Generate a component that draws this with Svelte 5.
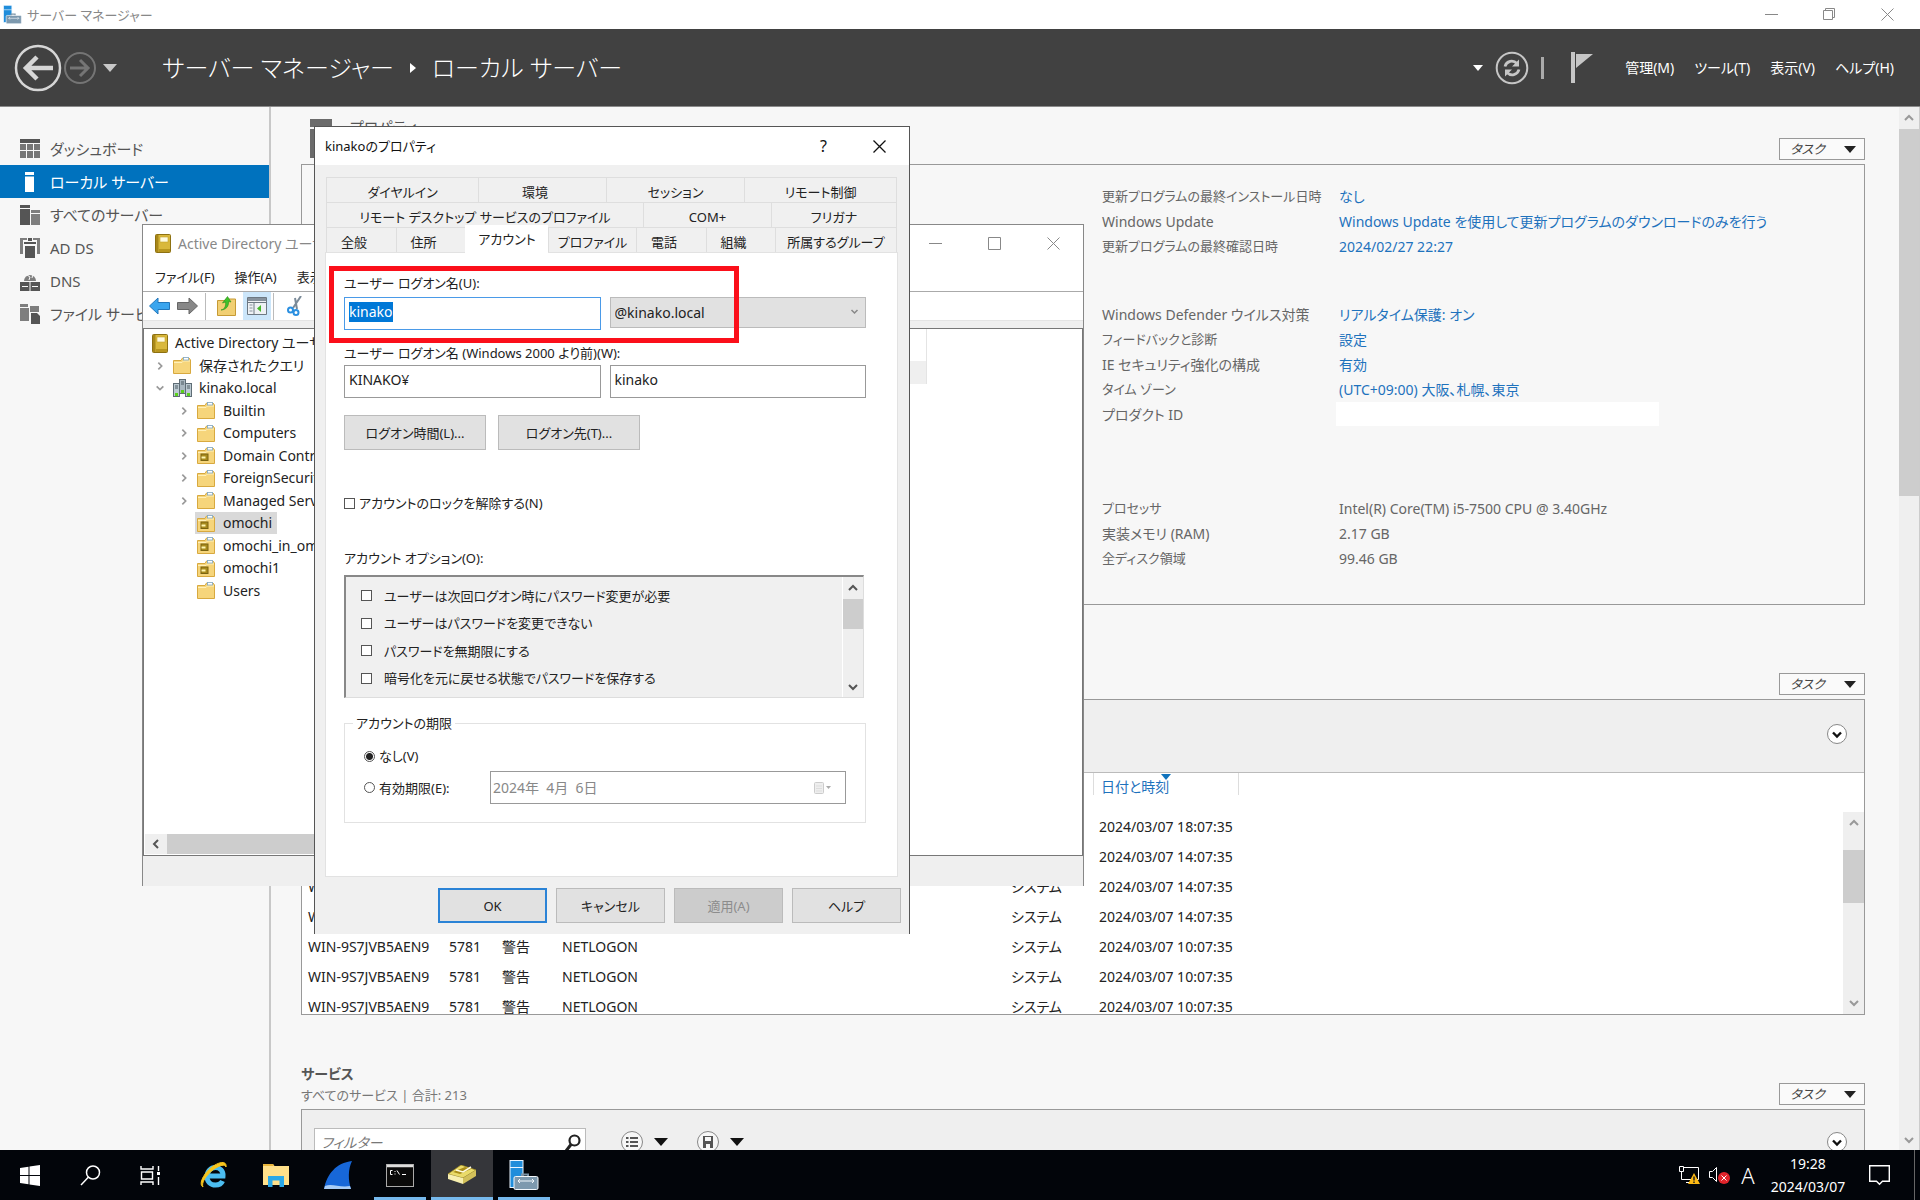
<script>
  import { onMount } from 'svelte';

  const nav = [
    { label: 'ダッシュボード', icon: 'dash' },
    { label: 'ローカル サーバー', icon: 'local', active: true },
    { label: 'すべてのサーバー', icon: 'all' },
    { label: 'AD DS', icon: 'adds' },
    { label: 'DNS', icon: 'dns' },
    { label: 'ファイル サービス', icon: 'file' }
  ];

  const facts = [
    [
      { k: '更新プログラムの最終インストール日時', v: 'なし', link: true },
      { k: 'Windows Update', v: 'Windows Update を使用して更新プログラムのダウンロードのみを行う', link: true },
      { k: '更新プログラムの最終確認日時', v: '2024/02/27 22:27', link: true }
    ],
    [
      { k: 'Windows Defender ウイルス対策', v: 'リアルタイム保護: オン', link: true },
      { k: 'フィードバックと診断', v: '設定', link: true },
      { k: 'IE セキュリティ強化の構成', v: '有効', link: true },
      { k: 'タイム ゾーン', v: '(UTC+09:00) 大阪、札幌、東京', link: true },
      { k: 'プロダクト ID', v: '', blank: true }
    ],
    [
      { k: 'プロセッサ', v: 'Intel(R) Core(TM) i5-7500 CPU @ 3.40GHz' },
      { k: '実装メモリ (RAM)', v: '2.17 GB' },
      { k: '全ディスク領域', v: '99.46 GB' }
    ]
  ];

  // Labels without Latin letters are set one size smaller so both scripts look even.
  const isKana = (s) => !/[A-Za-z]/.test(s);

  const events = ['18', '14', '14', '14', '10', '10', '10'].map((h) => `2024/03/07 ${h}:07:35`);

  const tree = [
    { t: 'Active Directory ユーザーとコンピューター', level: 0, icon: 'book' },
    { t: '保存されたクエリ', level: 1, icon: 'folder', arrow: 'r' },
    { t: 'kinako.local', level: 1, icon: 'domain', arrow: 'd' },
    { t: 'Builtin', level: 2, icon: 'folder', arrow: 'r' },
    { t: 'Computers', level: 2, icon: 'folder', arrow: 'r' },
    { t: 'Domain Controllers', level: 2, icon: 'ou', arrow: 'r' },
    { t: 'ForeignSecurityPrincipals', level: 2, icon: 'folder', arrow: 'r' },
    { t: 'Managed Service Accounts', level: 2, icon: 'folder', arrow: 'r' },
    { t: 'omochi', level: 2, icon: 'ou', selected: true },
    { t: 'omochi_in_omochi', level: 2, icon: 'ou' },
    { t: 'omochi1', level: 2, icon: 'ou' },
    { t: 'Users', level: 2, icon: 'folder' }
  ];

  const options = [
    'ユーザーは次回ログオン時にパスワード変更が必要',
    'ユーザーはパスワードを変更できない',
    'パスワードを無期限にする',
    '暗号化を元に戻せる状態でパスワードを保存する'
  ];

  let expiry = $state('never');
  let logon;
  onMount(() => {
    logon.focus();
    logon.select();
  });
</script>

{#snippet chev(dir)}
  <svg class="chev {dir}" viewBox="0 0 12 12" width="12" height="12"><path d="M2 8 L6 4 L10 8" fill="none" stroke="currentColor" stroke-width="2" /></svg>
{/snippet}

{#snippet tasks()}
  <button class="tasks">タスク<svg width="12" height="7" viewBox="0 0 12 7"><path d="M0 0H12L6 7Z" fill="#222" /></svg></button>
{/snippet}

{#snippet expander()}
  <button class="round" aria-label="展開">
    <svg width="22" height="22" viewBox="0 0 22 22"><circle cx="11" cy="11" r="9.5" fill="#fff" stroke="#888" /><path d="M7 9.5L11 13.5L15 9.5" fill="none" stroke="#111" stroke-width="2.4" /></svg>
  </button>
{/snippet}

{#snippet book()}
  <svg width="16" height="19" viewBox="0 0 16 19">
    <rect x="0.5" y="0.5" width="15" height="18" rx="1" fill="#d9b83c" stroke="#8d7112" />
    <rect x="1" y="1" width="2.5" height="17" fill="#a88719" />
    <rect x="5" y="3" width="8" height="5" fill="#fffbe0" stroke="#c2a02a" stroke-width="0.6" />
    <rect x="4" y="15" width="11" height="3" fill="#b8961f" />
  </svg>
{/snippet}

{#snippet treeIcon(kind)}
  {#if kind === 'book'}
    {@render book()}
  {:else if kind === 'domain'}
    <svg width="19" height="19" viewBox="0 0 19 19">
      <rect x="6.5" y="0.5" width="6" height="14" fill="#a9b7c0" stroke="#5f6d76" />
      <rect x="0.5" y="4.500" width="6" height="13" fill="#bccad2" stroke="#5f6d76" />
      <rect x="12.500" y="4.500" width="6" height="13" fill="#bccad2" stroke="#5f6d76" />
      <path d="M8 3h3M2 7h3M14 7h3M2 9h3M14 9h3M8 5h3" stroke="#4d5a63" />
      <path d="M2 14h3v3H2zM14 14h3v3h-3zM8 11h3v3H8z" fill="#5bd11b" />
    </svg>
  {:else}
    <svg width="18" height="17" viewBox="0 0 18 17">
      <path d="M0.5 3.500 H8 L9.500 1 H16 L17.500 3 V16.500 H0.500 Z" fill="#f6d57b" stroke="#d8a93f" />
      <path d="M1 5.500 H9 L10.500 4 H17" fill="none" stroke="#fff0b8" />
      <rect x="10.500" y="0.500" width="5" height="2.500" fill="#fff" stroke="#7da7c9" stroke-width="0.8" />
      {#if kind === 'ou'}
        <rect x="4" y="7" width="7" height="6.500" fill="#a88a1c" stroke="#7a6310" />
        <rect x="4.500" y="9.500" width="4" height="2" fill="#fff6b0" />
      {/if}
    </svg>
  {/if}
{/snippet}

{#snippet toolbox(w)}
  <svg width={w} height={w} viewBox="0 0 30 30">
    <rect x="1" y="0.500" width="13" height="27" fill="#1f8ddb" stroke="#e9f5ff" />
    <path d="M1 7.500H14" stroke="#e9f5ff" />
    <path d="M13 17v-2.500h6V17" fill="none" stroke="#7d95a8" stroke-width="2" />
    <rect x="5" y="16.500" width="24" height="13" rx="1.500" fill="#7d99ae" stroke="#f2f7fb" />
    <path d="M9 21h16M9 21l2-2M9 21l2 2M25 21l-2-2M25 21l-2 2" stroke="#f2f7fb" fill="none" />
  </svg>
{/snippet}

<div class="desktop">
  <header class="titlebar">
    {@render toolbox(19)}
    <h1>サーバー マネージャー</h1>
    <div class="winbtns">
      <button aria-label="最小化"><svg width="13" height="13"><path d="M0 6.500H13" stroke="#888" /></svg></button>
      <button aria-label="元に戻す"><svg width="13" height="13" fill="none" stroke="#888"><path d="M0.500 2.500h9v9h-9zM2.500 2.500v-2h9v9h-2" /></svg></button>
      <button aria-label="閉じる"><svg width="13" height="13" fill="none" stroke="#888"><path d="M0.500 0.500L12.500 12.500M12.500 0.500L0.500 12.500" /></svg></button>
    </div>
  </header>

  <div class="banner">
    <button class="plain" aria-label="戻る"><svg width="48" height="48" viewBox="0 0 48 48" fill="none" stroke="#d6d6d6"><circle cx="24" cy="24" r="22" stroke-width="2.500" /><path d="M39 24H12M23 13L12 24L23 35" stroke-width="4.500" /></svg></button>
    <button class="plain fwd" aria-label="進む"><svg width="34" height="34" viewBox="0 0 34 34" fill="none" stroke="#757575"><circle cx="17" cy="17" r="15" stroke-width="2" /><path d="M7 17H25M17 9L25 17L17 25" stroke-width="3" /></svg></button>
    <button class="plain drop" aria-label="履歴"><svg width="14" height="8"><path d="M0 0H14L7 8Z" fill="#c8c8c8" /></svg></button>
    <nav class="crumbs">
      <span>サーバー マネージャー</span>
      <svg width="6" height="10"><path d="M0 0L6 5L0 10Z" fill="#fff" /></svg>
      <span>ローカル サーバー</span>
    </nav>
    <div class="actions">
      <svg width="10" height="6"><path d="M0 0H10L5 6Z" fill="#fff" /></svg>
      <button class="plain" aria-label="更新"><svg width="34" height="34" viewBox="0 0 34 34" fill="none" stroke="#c6c6c6"><circle cx="17" cy="17" r="15.300" stroke-width="2" /><path d="M10 15.500C11.500 10 18 8.500 22 12.500M24 18.500C22.500 24 16 25.500 12 21.500" stroke-width="2.800" /><path d="M24 8.500V15.500H17ZM10 25.500V18.500H17Z" fill="#c6c6c6" stroke="none" /></svg></button>
      <i class="bar"></i>
      <button class="plain" aria-label="通知"><svg width="22" height="31"><path d="M0 0H4V31H0ZM5 2H22L5 16Z" fill="#c6c6c6" /></svg></button>
      <button class="plain menu">管理(M)</button>
      <button class="plain menu">ツール(T)</button>
      <button class="plain menu">表示(V)</button>
      <button class="plain menu">ヘルプ(H)</button>
    </div>
  </div>

  <div class="work">
    <aside>
      {#each nav as n}
        <a href="#{n.icon}" class="nav" class:active={n.active}>
          <svg width="20" height="20" viewBox="0 0 20 20" fill="currentColor">
            {#if n.icon === 'dash'}
              <path d="M0 0H20V4H0Z" />
              <path d="M0 5H6V11H0ZM7 5H13V11H7ZM14 5H20V11H14ZM0 12H6V19H0ZM7 12H13V19H7ZM14 12H20V19H14Z" opacity="0.8" />
            {:else if n.icon === 'local'}
              <path d="M5 0H14V3H5ZM5 4.500H14V20H5Z" />
            {:else if n.icon === 'all'}
              <path d="M0 0H10V3H0ZM0 4H10V20H0Z" />
              <path d="M11 5H20V8H11ZM11 9H20V20H11Z" opacity="0.75" />
            {:else if n.icon === 'adds'}
              <path d="M0 0H7V2H3V16H0ZM20 0H13V2H17V16H20Z" opacity="0.75" />
              <path d="M4 4H16V6H4ZM5 8H15V20H5ZM8 0H12V3H8Z" />
            {:else if n.icon === 'dns'}
              <path d="M4 10A6 6 0 1 1 16 10Z" opacity="0.75" />
              <path d="M0 11H9.500V20H0ZM10.500 11H20V20H10.500Z" />
              <path d="M2 15.500H8M12 15.500H18M7 4L10 6L9 9M13 3L12 7" stroke="#f7f7f7" fill="none" />
            {:else}
              <path d="M0 0H8V3H0ZM0 4H9V17H0ZM10 2H19V8H10Z" opacity="0.75" />
              <path d="M11 9H17L20 12V20H11Z" />
            {/if}
          </svg>
          {n.label}
        </a>
      {/each}
    </aside>

    <main>
      <section class="first">
        <div class="head">
          <svg class="prop" width="22" height="39"><path d="M0 0H22V8H0ZM0 10H22V39H0Z" fill="#6b6b6b" /></svg>
          <h2>プロパティ</h2>
          {@render tasks()}
        </div>
        <div class="panel facts">
          {#each facts as group}
            <dl>
              {#each group as f}
                <dt class:kana={isKana(f.k)}>{f.k}</dt>
                <dd>
                  {#if f.link}<a href="#setting">{f.v}</a>{:else if f.blank}<span class="blank"></span>{:else}{f.v}{/if}
                </dd>
              {/each}
            </dl>
          {/each}
        </div>
      </section>

      <section>
        <div class="head tall">{@render tasks()}</div>
        <div class="panel events">
          <div class="filterbar big">{@render expander()}</div>
          <div class="sheet">
            <table>
              <colgroup><col class="c1" /><col class="c2" /><col class="c3" /><col class="c4" /><col class="c5" /><col class="c6" /><col /></colgroup>
              <thead>
                <tr><th></th><th></th><th></th><th></th><th></th><th class="sorted"><span>日付と時刻</span><svg width="10" height="6"><path d="M0 0H10L5 6Z" fill="#1073bd" /></svg></th><th></th></tr>
              </thead>
              <tbody>
                {#each events as e}
                  <tr><td>WIN-9S7JVB5AEN9</td><td>5781</td><td>警告</td><td>NETLOGON</td><td>システム</td><td>{e}</td><td></td></tr>
                {/each}
              </tbody>
            </table>
            <div class="vbar inner">{@render chev('up')}<i></i>{@render chev('down')}</div>
          </div>
        </div>
      </section>

      <section class="rest">
        <div class="head tall">
          <div class="titles">
            <h2>サービス</h2>
            <p>すべてのサービス | 合計: 213</p>
          </div>
          {@render tasks()}
        </div>
        <div class="panel last">
          <div class="filterbar">
            <label class="search"><input placeholder="フィルター" aria-label="フィルター" />
              <svg width="16" height="19" viewBox="0 0 16 19" fill="none" stroke="#222" stroke-width="2.200"><circle cx="9.500" cy="6.500" r="5" /><path d="M6 10.500L1 17" stroke-width="3" /></svg></label>
            <button class="round combo" aria-label="クエリ"><svg width="24" height="24" viewBox="0 0 24 24"><circle cx="12" cy="12" r="10.500" fill="#f7f7f7" stroke="#888" /><path d="M6 8h2.500M6 12h2.500M6 16h2.500M10 8h8M10 12h8M10 16h8" stroke="#555" stroke-width="2" /></svg><svg width="14" height="8"><path d="M0 0H14L7 8Z" fill="#111" /></svg></button>
            <button class="round combo" aria-label="保存"><svg width="24" height="24" viewBox="0 0 24 24"><circle cx="12" cy="12" r="10.500" fill="#f7f7f7" stroke="#888" /><path d="M7 6H17V18H7Z" fill="#555" /><path d="M9 7h6v4H9zM10 14h4v4h-4z" fill="#f7f7f7" /></svg><svg width="14" height="8"><path d="M0 0H14L7 8Z" fill="#111" /></svg></button>
            <span class="grow"></span>
            {@render expander()}
          </div>
        </div>
      </section>
    </main>
    <div class="vbar outer">{@render chev('up')}<i></i>{@render chev('down')}</div>
  </div>

  <footer class="taskbar">
    <button aria-label="スタート"><svg width="20" height="21" viewBox="0 0 20 21" fill="#fff"><path d="M0 3L8.500 1.800V10H0ZM9.500 1.600L20 0V10H9.500ZM0 11H8.500V19.200L0 18ZM9.500 11H20V21L9.500 19.400Z" /></svg></button>
    <button aria-label="検索"><svg width="21" height="21" fill="none" stroke="#fff" stroke-width="1.500"><circle cx="13" cy="7.500" r="6.500" /><path d="M8.500 12L1 20" /></svg></button>
    <button aria-label="タスク ビュー"><svg width="21" height="21" fill="none" stroke="#fff" stroke-width="1.400"><path d="M1 1v3h12V1M1 20v-3h12v3M1.500 7h11v7h-11zM18.500 1v5M18.500 12v8" /><path d="M17 7h3v3h-3z" fill="#fff" stroke="none" /></svg></button>
    <button class="app ie" aria-label="Internet Explorer"><svg width="28" height="28" viewBox="0 0 28 28" fill="none"><path d="M7 15H23C23.500 9.500 19.500 6.500 15.500 6.500C10.500 6.500 7 10.500 7 15.500C7 20.500 10.500 24 15.500 24C19 24 21.500 22.500 22.500 20" stroke="#4cbdf0" stroke-width="5" /><path d="M3 26C-2 23 4 12 12 6C20 0 27 0 26 6C25 3 20 4 14 8C6 14 1 22 3 26Z" fill="#f8c51c" stroke="#f8c51c" /></svg></button>
    <button class="app" aria-label="エクスプローラー"><svg width="28" height="24" viewBox="0 0 28 24"><path d="M1 1H11L12.500 3H27V22H1Z" fill="#ffe08a" /><path d="M1 1H11L12 3H1Z" fill="#e9b53b" /><path d="M6 24V13H22V24H17.500V17.500H10.500V24Z" fill="#2aa8e8" /></svg></button>
    <button class="app" aria-label="Wireshark"><svg width="30" height="29" viewBox="0 0 30 29"><path d="M1 28C4 13 13 2 29 0C25 8 25 19 28 28Z" fill="#1767d8" /><path d="M2 25C9 22 17 27 27 25L28 28H1Z" fill="#a9cdf6" /></svg></button>
    <button class="app open" aria-label="コマンド プロンプト"><svg width="28" height="23" viewBox="0 0 28 23"><rect x="0.500" y="0.500" width="27" height="22" fill="#0a0a0a" stroke="#aaa" /><path d="M1 2H27" stroke="#ddd" stroke-width="2.500" /><path d="M6.500 6.500H4.500V10.500H6.500M9 7v1M9 9.500v1M11 6.500L13.500 10.500M16 10.500H20" stroke="#fff" fill="none" /></svg></button>
    <button class="app open current" aria-label="Active Directory"><svg width="30" height="20" viewBox="0 0 30 20"><path d="M1 9L14 0L29 5L16 13Z" fill="#eadb6a" stroke="#9b861f" stroke-width="0.700" /><path d="M1 9L16 13V19L1 14Z" fill="#f7efb0" /><path d="M16 13L29 5V11L16 19Z" fill="#d2c05a" /><path d="M6 7L18 2L24 4L13 9Z" fill="#a98c17" /><path d="M9 5L16 7L24 2" stroke="#fffbe0" stroke-width="1.500" fill="none" /></svg></button>
    <button class="app open" aria-label="サーバー マネージャー">{@render toolbox(30)}</button>
    <span class="grow"></span>
    <div class="tray">
      <svg width="21" height="20" viewBox="0 0 21 20" fill="none" stroke="#fff"><path d="M5 2.500H19.500V14.500H2.500V7M7 17.500H14M0.500 1.500H4.500V6.500H0.500Z" /><path d="M15 8L21 19H9Z" fill="#fdb913" stroke="none" /><path d="M15 11.500V15.500M15 16.500V18" stroke="#222" stroke-width="1.500" /></svg>
      <svg width="21" height="18" viewBox="0 0 21 18" fill="none" stroke="#fff"><path d="M0.500 5.500H3.500L7.500 1.500V15.500L3.500 11.500H0.500Z" /><circle cx="15" cy="12" r="6" fill="#e0242b" stroke="none" /><path d="M12.500 9.500L17.500 14.500M17.500 9.500L12.500 14.500" /></svg>
      <span class="ime">A</span>
      <time><span>19:28</span><span>2024/03/07</span></time>
      <svg width="21" height="21" fill="none" stroke="#fff" stroke-width="1.400"><path d="M0.700 0.700H20.300V16.300H13.500L10.500 19.300L7.500 16.300H0.700Z" /></svg>
      <i class="peek"></i>
    </div>
  </footer>

  <div class="aduc" role="group" aria-label="Active Directory ユーザーとコンピューター">
    <div class="bar1">
      {@render book()}
      <span class="cap">Active Directory ユーザーとコンピューター</span>
      <div class="ctl">
        <button class="plain" aria-label="最小化"><svg width="13" height="13"><path d="M0 6.500H13" stroke="#888" /></svg></button>
        <button class="plain" aria-label="最大化"><svg width="13" height="13"><path d="M0.500 0.500h12v12h-12z" fill="none" stroke="#888" /></svg></button>
        <button class="plain" aria-label="閉じる"><svg width="13" height="13"><path d="M0.500 0.500L12.500 12.500M12.500 0.500L0.500 12.500" stroke="#888" /></svg></button>
      </div>
    </div>
    <div class="menus"><button class="plain">ファイル(F)</button><button class="plain">操作(A)</button><button class="plain">表示(V)</button></div>
    <div class="tools">
      <svg width="21" height="20" viewBox="0 0 21 20"><path d="M0.500 10L9 2V6.500H20.500V13.500H9V18Z" fill="#3aa5ee" stroke="#2277bb" /></svg>
      <svg width="21" height="20" viewBox="0 0 21 20"><path d="M20.500 10L12 2V6.500H0.500V13.500H12V18Z" fill="#888" stroke="#666" /></svg>
      <i></i>
      <svg class="up" width="19" height="20" viewBox="0 0 19 20"><path d="M0.500 4.500H8L9 3H18.500V19.500H0.500Z" fill="#f1cf73" stroke="#c69a35" /><path d="M4 14C8 13 9 10 8.500 6L5.500 7L10.500 0.500L14 6L11.500 5.500C12 10 9 14 4 14Z" fill="#3fc22a" stroke="#2a8f1b" stroke-width="0.600" /></svg>
      <span class="on"><svg width="20" height="18" viewBox="0 0 20 18"><path d="M0.500 0.500H19.500V17.500H0.500Z" fill="#eef1f4" stroke="#6d7882" /><path d="M1 2.500H19" stroke="#87929d" stroke-width="3" /><path d="M7 5V17M1 5.500H19" stroke="#6d7882" /><path d="M2.500 8h3M2.500 11h3M2.500 14h3" stroke="#87929d" /><path d="M14 8V15L10 11.500Z" fill="#46b82a" /></svg></span>
      <i></i>
      <svg class="cut" width="16" height="20" viewBox="0 0 16 20" fill="none"><path d="M14 0L6 12M8 2L10 13" stroke="#7b8b99" stroke-width="2" /><circle cx="3.500" cy="14" r="2.500" stroke="#2a8fe0" stroke-width="2" /><circle cx="9" cy="16.500" r="2.500" stroke="#2a8fe0" stroke-width="2" /></svg>
    </div>
    <div class="panes">
      <div class="pane">
        <ul>
          {#each tree as n}
            <li class="lv{n.level}">
              <span class="tw">{#if n.arrow}{@render chev(n.arrow === 'r' ? 'right' : 'down')}{/if}</span>
              <span class="node" class:selected={n.selected}><span class="ico">{@render treeIcon(n.icon)}</span><span class="name">{n.t}</span></span>
            </li>
          {/each}
        </ul>
        <div class="hbar"><span>{@render chev('left')}</span><i></i></div>
      </div>
      <div class="list"><i></i></div>
    </div>
    <div class="status"></div>
  </div>

  <div class="dialog" role="dialog" aria-label="kinakoのプロパティ">
    <div class="dtitle">
      <span>kinakoのプロパティ</span>
      <button class="plain" aria-label="ヘルプ">?</button>
      <button class="plain" aria-label="閉じる"><svg width="13" height="13"><path d="M0.500 0.500L12.500 12.500M12.500 0.500L0.500 12.500" stroke="#111" stroke-width="1.300" /></svg></button>
    </div>
    <div class="dbody">
      <div class="tabs t1"><button>ダイヤルイン</button><button class="short">環境</button><button>セッション</button><button>リモート制御</button></div>
      <div class="tabs t2"><button>リモート デスクトップ サービスのプロファイル</button><button>COM+</button><button>フリガナ</button></div>
      <div class="tabs t3"><button class="short">全般</button><button class="short">住所</button><button class="cur">アカウント</button><button>プロファイル</button><button class="short">電話</button><button class="short">組織</button><button>所属するグループ</button></div>
      <div class="page">
        <label for="upn">ユーザー ログオン名(U):</label>
        <div class="pair p1">
          <input id="upn" class="focus" value="kinako" bind:this={logon} />
          <div class="domain"><select aria-label="ドメイン"><option>@kinako.local</option></select>{@render chev('down')}</div>
        </div>
        <label class="lab-sam" for="sam">ユーザー ログオン名 (Windows 2000 より前)(W):</label>
        <div class="pair p2">
          <input value="KINAKO¥" aria-label="NetBIOS ドメイン" readonly />
          <input id="sam" value="kinako" />
        </div>
        <div class="btns"><button class="btn">ログオン時間(L)...</button><button class="btn">ログオン先(T)...</button></div>
        <label class="check"><input type="checkbox" />アカウントのロックを解除する(N)</label>
        <div class="lab-opts" id="opts">アカウント オプション(O):</div>
        <div class="options" role="group" aria-labelledby="opts">
          <div class="rows">
            {#each options as o}
              <label><input type="checkbox" />{o}</label>
            {/each}
          </div>
          <div class="vbar list-bar">{@render chev('up')}<i></i>{@render chev('down')}</div>
        </div>
        <fieldset>
          <legend>アカウントの期限</legend>
          <label class="radio"><input type="radio" name="exp" value="never" bind:group={expiry} />なし(V)</label>
          <div class="date">
            <label class="radio"><input type="radio" name="exp" value="end" bind:group={expiry} />有効期限(E):</label>
            <div class="datebox"><input value="2024年  4月  6日" aria-label="有効期限の日付" disabled /><svg width="18" height="12" viewBox="0 0 18 12"><rect x="0.500" y="0.500" width="9" height="11" rx="1" fill="#eee" stroke="#ccc" /><path d="M2 4h6M2 6.500h6M2 9h6" stroke="#ddd" /><path d="M12 4H17L14.500 7Z" fill="#aaa" /></svg></div>
          </div>
        </fieldset>
      </div>
      <div class="dfoot"><button class="btn ok">OK</button><button class="btn">キャンセル</button><button class="btn" disabled>適用(A)</button><button class="btn">ヘルプ</button></div>
    </div>
    <div class="mark"></div>
  </div>
</div>

<style>
  :global(body) { margin: 0; overflow: hidden; }
  .desktop {
    position: relative; height: 100vh; display: flex; flex-direction: column; overflow: hidden;
    font: 14px/20px "Noto Sans", "Noto Sans CJK JP", sans-serif;
    font-feature-settings: "palt"; color: #222; background: #f7f7f7;
  }
  .desktop * { box-sizing: border-box; }
  button, input, select { font: inherit; font-feature-settings: inherit; color: inherit; margin: 0; border-radius: 0; }
  button { padding: 0; white-space: nowrap; }
  svg { display: block; flex: none; }
  .plain, .winbtns button, .taskbar button, .round { border: 0; background: none; }
  h1, h2, p, dl, dd, ul { margin: 0; padding: 0; font-weight: 400; }
  .grow { flex: 1; }
  .chev.down { transform: rotate(180deg); }
  .chev.right { transform: rotate(90deg); }
  .chev.left { transform: rotate(-90deg); }

  .titlebar { height: 29px; flex: none; display: flex; align-items: center; background: #fff; padding: 0 4px 0 3px; gap: 5px; }
  h1 { font-size: 13px; color: #888; flex: 1; }
  .winbtns { display: flex; }
  .winbtns button { width: 58px; height: 28px; display: grid; place-items: center; }

  .banner { height: 78px; flex: none; display: flex; align-items: center; background: #414141; color: #fff; padding: 0 26px 0 14px; border-bottom: 1px solid #8a8a8a; }
  .fwd { margin-left: 1px; }
  .drop { margin-left: 6px; padding: 4px 0; }
  .crumbs { display: flex; align-items: center; gap: 16px; margin-left: 45px; font-size: 24px; line-height: 40px; font-weight: 300; white-space: nowrap; flex: 1; }
  .actions { display: flex; align-items: center; }
  .actions .bar { width: 3px; height: 22px; background: #aaa; margin: 0 27px 0 12px; }
  .actions .plain:first-of-type { margin-left: 12px; }
  .menu { font-size: 14px; margin-left: 20px; }
  .actions .menu:nth-of-type(3) { margin-left: 32px; }

  .work { flex: 1; min-height: 0; display: flex; }
  aside { width: 271px; flex: none; padding-top: 25px; border-right: 2px solid #c8c8c8; }
  .nav { display: flex; align-items: center; gap: 10px; height: 33px; padding-left: 20px; font-size: 15px; color: #555; text-decoration: none; white-space: nowrap; }
  .nav.active { background: #0072be; color: #fff; }
  main { flex: 1; min-width: 0; padding: 0 34px 0 30px; display: flex; flex-direction: column; overflow: hidden; }
  section { flex: none; }
  .head { height: 57px; display: flex; align-items: flex-end; padding-bottom: 4px; }
  .head.tall { height: 94px; }
  .prop { margin: 0 18px 2px 9px; }
  h2 { font-size: 15px; line-height: 24px; color: #555; }
  .first h2 { align-self: flex-start; padding-top: 8px; }
  .titles h2 { font-weight: 600; font-size: 14px; line-height: 22px; }
  .titles p { color: #777; font-size: 13px; }
  .tasks { display: flex; align-items: center; justify-content: space-between; width: 86px; height: 22px; margin-left: auto; padding: 0 8px 0 10px; background: #fafafa; border: 1px solid #999; color: #444; font-size: 13px; line-height: 18px; font-style: italic; }
  .panel { border: 1px solid #999; }
  .facts { height: 441px; display: flex; flex-direction: column; gap: 43px; padding: 19px 0 0 800px; color: #666; line-height: 25px; white-space: nowrap; }
  .facts dl { display: grid; grid-template-columns: 237px 1fr; grid-auto-rows: 25px; }
  .facts dl:last-child { padding-top: 26px; }
  .facts a { color: #1e72bd; text-decoration: none; }
  .kana { font-size: 13px; }
  .blank { display: block; width: 323px; height: 24px; margin-left: -3px; background: #fff; }
  .events { height: 316px; display: flex; flex-direction: column; }
  .filterbar { display: flex; align-items: flex-start; background: #efefef; padding: 18px 16px 20px 12px; border-bottom: 1px solid #bbb; }
  .filterbar.big { height: 73px; align-items: center; justify-content: flex-end; padding-top: 14px; padding-bottom: 18px; }
  .sheet { flex: 1; min-height: 0; display: flex; background: #fff; overflow: hidden; }
  table { flex: 1; border-collapse: collapse; table-layout: fixed; align-self: flex-start; color: #222; }
  .c1 { width: 141px; } .c2 { width: 53px; } .c3 { width: 60px; } .c4 { width: 449px; } .c5 { width: 88px; } .c6 { width: 146px; }
  th, td { padding: 0 0 0 6px; text-align: left; font-weight: 400; height: 30px; white-space: nowrap; }
  thead th { height: 39px; vertical-align: top; }
  th.sorted { padding: 4px 0 0 8px; color: #1e72bd; position: relative; background: linear-gradient(#ddd, #ddd) 0 0 / 1px 22px no-repeat, linear-gradient(#ddd, #ddd) 100% 0 / 1px 22px no-repeat; }
  th.sorted svg { position: absolute; left: 68px; top: 1px; }
  .rest, .last { display: flex; flex-direction: column; }
  .last { flex: none; }
  .search { display: flex; align-items: center; width: 272px; height: 30px; background: #fff; border: 1px solid #bbb; padding: 0 4px 0 6px; }
  .search input { flex: 1; min-width: 0; border: 0; outline: 0; font-style: italic; background: none; padding: 0; }
  .search input::placeholder { color: #777; }
  .round { display: block; padding: 0; }
  .combo { display: flex; align-items: center; gap: 10px; margin: 2px 0 0 34px; }
  .combo + .combo { margin-left: 28px; }
  .filterbar > .round:last-child { margin-top: 3px; }
  .filterbar.big > .round:last-child { margin-top: 0; }

  .vbar { display: flex; flex-direction: column; align-items: center; background: #efefef; color: #999; flex: none; }
  .vbar i { width: 100%; background: #cdcdcd; }
  .vbar .down { margin-top: auto; }
  .outer { width: 21px; padding: 5px 0 4px; border-right: 1px solid #ccc; }
  .outer i { height: 367px; margin-top: 5px; }
  .inner { width: 21px; margin-top: 39px; padding: 5px 0; }
  .inner i { height: 53px; margin-top: 21px; }

  .taskbar { height: 50px; flex: none; display: flex; background: #02050a; color: #fff; }
  .taskbar button { width: 60px; display: grid; place-items: center; }
  .taskbar .app { width: 62px; }
  .taskbar .ie { margin-left: 3px; }
  .taskbar .open { background: linear-gradient(#76b9ed, #76b9ed) 50% 100% / 52px 3px no-repeat; }
  .taskbar .current { background: linear-gradient(#76b9ed, #76b9ed) 50% 100% / 62px 3px no-repeat, #35363a; }
  .tray { display: flex; align-items: center; }
  .tray svg + svg { margin-left: 9px; }
  .ime { font-size: 22px; width: 16px; margin-left: 10px; text-align: center; font-weight: 300; }
  time { display: flex; flex-direction: column; align-items: center; line-height: 23px; width: 76px; margin: 0 23px 0 14px; }
  .peek { align-self: stretch; width: 6px; border-left: 1px solid #666; margin-left: 24px; }

  .aduc { position: absolute; left: 142px; top: 224px; width: 942px; background: #fff; border: 1px solid #888; border-bottom: 0; }
  .bar1 { height: 37px; display: flex; align-items: center; gap: 7px; padding: 0 23px 0 12px; color: #888; white-space: nowrap; }
  .cap { flex: 1; }
  .ctl { display: flex; gap: 46px; }
  .menus { display: flex; gap: 20px; padding: 5px 13px 4px 12px; border-bottom: 1px solid #aaa; font-size: 13px; }
  .tools { display: flex; align-items: center; height: 29px; padding-left: 6px; border-bottom: 1px solid #e4e4e4; gap: 7px; }
  .tools i { width: 1px; height: 27px; background: #bbb; }
  .tools .up { margin: 0 2px 0 4px; }
  .tools .cut { margin-left: 6px; }
  .on { display: grid; place-items: center; width: 28px; height: 28px; background: #cce6fa; margin: 0 -5px 0 -2px; }
  .panes { display: flex; margin-top: 7px; height: 528px; border: 1px solid #777; box-shadow: 0 -7px 0 #efefef; }
  .pane { width: 300px; display: flex; flex-direction: column; padding: 3px 0 1px 1px; }
  .pane ul { list-style: none; display: grid; grid-auto-rows: 1fr; height: 270px; }
  .pane li { display: flex; align-items: center; white-space: nowrap; min-height: 0; }
  .tw { color: #999; }
  .lv0 .tw { width: 5px; }
  .lv1 .tw { width: 16px; margin-left: 10px; }
  .lv2 .tw { width: 16px; margin-left: 34px; }
  .tw .chev { width: 10px; height: 10px; }
  .node { display: flex; align-items: center; height: 22px; padding: 0 5px 0 2px; }
  .node.selected { background: #d9d9d9; }
  .ico { width: 24px; }
  .lv0 .ico { width: 21px; }
  .name { padding-left: 2px; }
  .hbar { display: flex; align-items: stretch; height: 20px; margin-top: auto; background: #efefef; color: #555; }
  .hbar span { width: 22px; display: grid; place-items: center; }
  .hbar i { flex: 1; background: #cdcdcd; }
  .list { flex: 1; display: flex; justify-content: flex-start; align-items: flex-start; }
  .list i { width: 483px; height: 55px; background: linear-gradient(#fff 32px, #efefef 32px); border-right: 1px solid #e4e4e4; }
  .status { height: 30px; background: #efefef; }

  .dialog { position: absolute; left: 314px; top: 126px; width: 596px; background: #f0f0f0; border: 1px solid #555; border-bottom: 0; font-size: 13px; }
  .dtitle { display: flex; align-items: center; height: 38px; background: #fff; padding: 0 23px 0 10px; color: #111; }
  .dtitle span { flex: 1; }
  .dtitle button + button { margin-left: 46px; }
  .dtitle button:nth-of-type(1) { font-size: 16px; }
  .dbody { padding: 12px 8px 11px 10px; }
  .tabs { display: grid; margin: 0 4px 0 1px; height: 25px; }
  .tabs button { background: #f0f0f0; border: 1px solid #dedede; border-width: 1px 0 0 1px; color: #222; padding-top: 3px; }
  .tabs button:last-child { border-right-width: 1px; }
  .tabs .short { padding-right: 15px; }
  .t1 { grid-template-columns: 152fr 128fr 138fr 153fr; }
  .t2 { grid-template-columns: 317fr 128fr 126fr; }
  .t3 { grid-template-columns: 70fr 69fr 83fr 88fr 70fr 69fr 122fr; }
  .tabs .cur { background: #fff; margin: -2px 0 -1px; padding: 0 0 2px; border-color: #fff; z-index: 1; }
  .page { background: #fff; border: 1px solid #e2e2e2; margin-right: 3px; padding: 20px 31px 53px 18px; display: flex; flex-direction: column; color: #222; }
  .pair { display: grid; grid-template-columns: 1fr 1fr; gap: 9px; font-size: 14px; }
  .p1 { margin-top: 4px; height: 33px; }
  .p2 { margin-top: 2px; height: 33px; }
  .lab-sam { margin-top: 13px; }
  .pair input { width: 100%; min-width: 0; border: 1px solid #999; padding: 0 4px 3px; outline: 0; background: #fff; }
  .pair .focus { border-color: #4a9ae8; }
  .focus::selection { background: #0078d7; color: #fff; }
  .domain { position: relative; height: 31px; }
  select { width: 100%; height: 100%; appearance: none; border: 1px solid #bbb; background: #e1e1e1; padding: 1px 4px 0; }
  .domain .chev { position: absolute; right: 7px; top: 10px; width: 9px; height: 9px; color: #888; }
  .btns { display: flex; gap: 12px; margin-top: 17px; }
  .btn { background: #e1e1e1; border: 1px solid #bbb; height: 35px; color: #222; }
  .btns .btn { width: 142px; }
  .check { display: flex; align-items: center; gap: 4px; margin-top: 43px; }
  input[type="checkbox"], input[type="radio"] { appearance: none; width: 11px; height: 11px; border: 1px solid #555; background: #fff; flex: none; }
  input[type="radio"] { border-radius: 50%; }
  input[type="radio"]:checked { background: radial-gradient(#222 3px, #fff 4px); }
  .lab-opts { margin-top: 35px; }
  .options { display: flex; height: 123px; margin: 7px 2px 0 0; background: #f0f0f0; border: solid #888; border-width: 2px 1px 1px 2px; border-right-color: #ddd; border-bottom-color: #ddd; }
  .rows { flex: 1; display: grid; grid-auto-rows: 1fr; padding: 5px 0 5px 15px; }
  .rows label { display: flex; align-items: center; gap: 12px; }
  .list-bar { width: 21px; color: #555; padding: 5px 0 4px; border-left: 1px solid #fff; }
  .list-bar i { height: 30px; margin-top: 5px; }
  fieldset { margin: 15px 0 0; padding: 13px 19px 18px; border: 1px solid #e2e2e2; }
  legend { padding: 0 3px; margin-left: -11px; }
  .radio { display: flex; align-items: center; gap: 4px; }
  .date { display: flex; align-items: center; justify-content: space-between; margin-top: 5px; }
  .datebox { display: flex; align-items: center; width: 356px; height: 33px; border: 1px solid #999; padding: 0 13px 0 2px; font-size: 14px; }
  .datebox input { flex: 1; min-width: 0; border: 0; padding: 0; background: none; color: #888; }
  .dfoot { display: flex; justify-content: flex-end; gap: 9px; margin-top: 11px; }
  .dfoot .btn { width: 109px; }
  .dfoot .ok { border: 2px solid #2b83d6; }
  .btn:disabled { background: #ccc; color: #8c8c8c; }
  .mark { position: absolute; left: 14px; top: 139px; width: 410px; height: 77px; border: 5px solid #fb0f1a; pointer-events: none; }
</style>
